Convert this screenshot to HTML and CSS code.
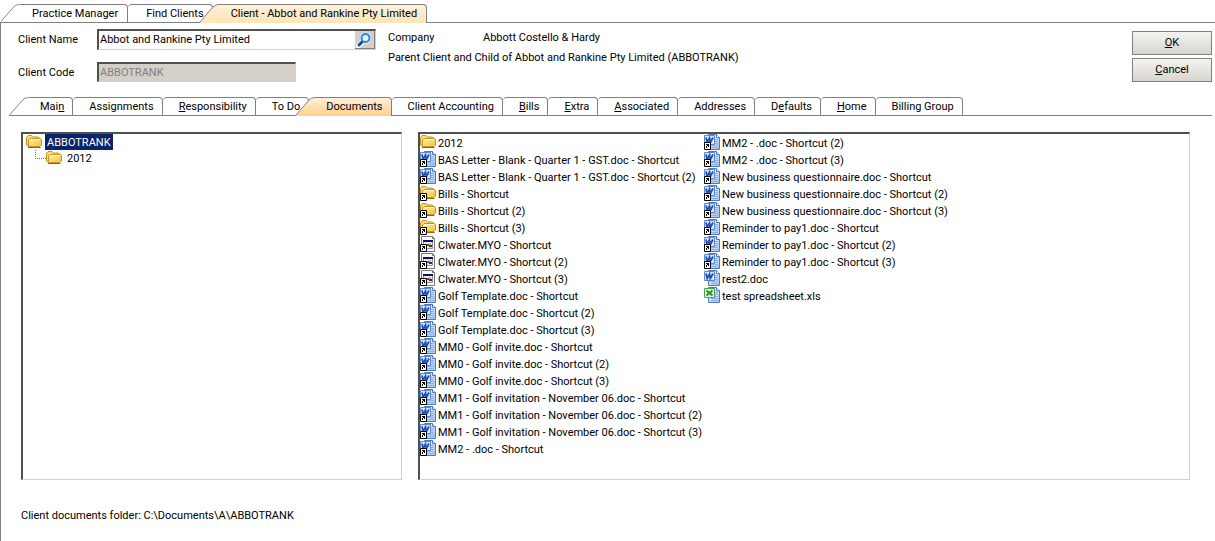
FILE: index.html
```html
<!DOCTYPE html>
<html lang="en">
<head>
  <meta charset="UTF-8">
  <title>Client - Abbot and Rankine Pty Limited</title>
  <meta name="viewport" content="width=device-width, initial-scale=1.0">
  <link rel="stylesheet" href="styles.css">
</head>
<body>

  <!-- Icons used by the tree and the file list -->
  <svg class="sprite" aria-hidden="true">
    <defs>
      <linearGradient id="gradFolder" x1="0" y1="0" x2="1" y2="1">
        <stop offset="0" stop-color="#fff6a8"/>
        <stop offset="1" stop-color="#f4bc3c"/>
      </linearGradient>
      <linearGradient id="gradPage" x1="0" y1="0" x2="1" y2="1">
        <stop offset="0" stop-color="#f4f8ff"/>
        <stop offset="1" stop-color="#a4c4f4"/>
      </linearGradient>
      <linearGradient id="gradTop" x1="0" y1="0" x2="0" y2="1">
        <stop offset="0" stop-color="#fff1dc"/>
        <stop offset="1" stop-color="#ffe4b4"/>
      </linearGradient>
      <linearGradient id="gradSub" x1="0" y1="0" x2="0" y2="1">
        <stop offset="0" stop-color="#fff0dc"/>
        <stop offset="1" stop-color="#ffd08c"/>
      </linearGradient>
    </defs>
    <symbol id="folder" viewBox="0 0 16 16">
      <path d="M.5 11V3.500L2 1.500h4l1.500 1.500h5L13.500 4v8H2z" fill="#f9dc70" stroke="#c89020"/>
      <path d="M2.500 12.500V6L4 4.500h10.500L15.500 6v5L14 12.500z" fill="url(#gradFolder)" stroke="#c89428"/>
      <path d="M2 13.500h12.500" stroke="#94640c" fill="none"/>
      <path d="M4 5.500h10" stroke="#fffbe0"/>
    </symbol>
    <symbol id="arrow" viewBox="0 0 16 16">
      <path d="M.5 8.500h6v7h-6z" fill="#fff" stroke="#000"/>
      <path d="M2 10h3v3H4v-1H3v2H2v-2h1v-1H2z" fill="#000"/>
    </symbol>
    <symbol id="word" viewBox="0 0 16 16">
      <path d="M4.500.5h8l3 3v12h-11z" fill="url(#gradPage)" stroke="#5078bc"/>
      <path d="M12.500.5v3h3" fill="#fff" stroke="#5078bc"/>
      <path d="M11 5.500h3M11 7.500h3M11 9.500h3M7 11.500h7M7 13.500h7" stroke="#8cb0ea"/>
      <path d="M.5 1.500h10v9h-10z" fill="#dce8fc" stroke="#5c88d8"/>
      <path d="M2 3.500l1.200 5L5.500 4l.8 4.500L9 3.500" fill="none" stroke="#2450b0" stroke-width="1.800"/>
    </symbol>
    <symbol id="excel" viewBox="0 0 16 16">
      <path d="M4.500.5h8l3 3v12h-11z" fill="url(#gradPage)" stroke="#5078bc"/>
      <path d="M12.500.5v3h3" fill="#fff" stroke="#5078bc"/>
      <path d="M11 5.500h3M11 7.500h3M11 9.500h3M7 11.500h7M7 13.500h7" stroke="#8cb0ea"/>
      <path d="M.5 1.500h10v9h-10z" fill="#e4f6e0" stroke="#48a448"/>
      <path d="M2.500 3.500l6 5M8.500 3.500l-6 5" stroke="#2c8c2c" stroke-width="2"/>
    </symbol>
    <symbol id="myo" viewBox="0 0 16 16">
      <path d="M1.500.5h11l2 2v13h-13z" fill="#fff" stroke="#777"/>
      <path d="M12.500.5v2h2" fill="none" stroke="#777"/>
      <path d="M3.500 4.500h9v8h-9z" fill="#e6eaf8" stroke="#8890b0"/>
      <path d="M3 5h10" stroke="#10106c" stroke-width="2"/>
      <path d="M7 8h2v2H7z" fill="#d02020"/>
      <path d="M9 7h2v2H9z" fill="#e8c420"/>
      <path d="M9 9h3v2H9z" fill="#1030c0"/>
    </symbol>
  </svg>

  <nav class="tabs window-tabs" role="tablist" aria-label="Windows">
    <button class="tab first" role="tab"><svg class="slant" viewBox="0 0 20 19"><path d="M.5 18.500L14 3Q16.500.5 20 .5"/></svg><span>Practice Manager</span></button>
    <button class="tab" role="tab"><span>Find Clients</span></button>
    <button class="tab active" role="tab" aria-selected="true"><svg class="slant" viewBox="0 0 20 19"><path class="fill-top" d="M.5 19L14 3Q16.500.5 20 .5V19z"/><path d="M.5 18.500L14 3Q16.500.5 20 .5"/></svg><span>Client - Abbot and Rankine Pty Limited</span></button>
    <div class="tabs-line"></div>
  </nav>

  <main class="window">
    <form class="header">
      <div class="fields">
        <label for="clientName">Client Name</label>
        <div class="lookup">
          <input type="text" id="clientName" value="Abbot and Rankine Pty Limited">
          <button type="button" class="search" aria-label="Find client">
            <svg viewBox="0 0 18 16">
              <path d="M8 9.500L3.500 14" stroke="#fff" stroke-width="5" stroke-linecap="round"/>
              <circle cx="10.500" cy="6" r="5.500" fill="#fff"/>
              <path d="M7.500 9.500L4 13" stroke="#1648a8" stroke-width="3" stroke-linecap="round"/>
              <circle cx="10.500" cy="6" r="4" fill="#e4f6ff" stroke="#2488dc" stroke-width="2"/>
            </svg>
          </button>
        </div>
        <label for="clientCode">Client Code</label>
        <input type="text" id="clientCode" value="ABBOTRANK" disabled>
      </div>
      <div class="details">
        <p><span class="caption">Company</span><span>Abbott Costello &amp; Hardy</span></p>
        <p>Parent Client and Child of Abbot and Rankine Pty Limited (ABBOTRANK)</p>
      </div>
      <div class="actions">
        <button type="button"><u>O</u>K</button>
        <button type="button"><u>C</u>ancel</button>
      </div>
    </form>

    <nav class="tabs client-tabs" role="tablist" aria-label="Client">
      <button class="tab first" role="tab"><svg class="slant" viewBox="0 0 20 19"><path d="M.5 18.500L14 3Q16.500.5 20 .5"/></svg><span>Mai<u>n</u></span></button>
      <button class="tab" role="tab"><span>Assignments</span></button>
      <button class="tab" role="tab"><span><u>R</u>esponsibility</span></button>
      <button class="tab" role="tab"><span>To Do</span></button>
      <button class="tab active" role="tab" aria-selected="true"><svg class="slant" viewBox="0 0 20 19"><path class="fill-sub" d="M.5 19L14 3Q16.500.5 20 .5V19z"/><path d="M.5 18.500L14 3Q16.500.5 20 .5"/></svg><span>Documents</span></button>
      <button class="tab" role="tab"><span>Client Accounting</span></button>
      <button class="tab" role="tab"><span><u>B</u>ills</span></button>
      <button class="tab" role="tab"><span><u>E</u>xtra</span></button>
      <button class="tab" role="tab"><span><u>A</u>ssociated</span></button>
      <button class="tab" role="tab"><span>Addresses</span></button>
      <button class="tab" role="tab"><span>D<u>e</u>faults</span></button>
      <button class="tab" role="tab"><span><u>H</u>ome</span></button>
      <button class="tab" role="tab"><span>Billing Group</span></button>
      <div class="tabs-line"></div>
    </nav>

    <div class="panels">
      <ul class="panel tree">
        <li>
          <div class="node selected"><svg class="icon"><use href="#folder"/></svg><span>ABBOTRANK</span></div>
          <ul>
            <li class="node"><svg class="icon"><use href="#folder"/></svg><span>2012</span></li>
          </ul>
        </li>
      </ul>

      <ul class="panel files">
        <li><svg class="icon"><use href="#folder"/></svg>2012</li>
        <li><svg class="icon"><use href="#word"/><use href="#arrow"/></svg>BAS Letter - Blank - Quarter 1 - GST.doc - Shortcut</li>
        <li><svg class="icon"><use href="#word"/><use href="#arrow"/></svg>BAS Letter - Blank - Quarter 1 - GST.doc - Shortcut (2)</li>
        <li><svg class="icon"><use href="#folder"/><use href="#arrow"/></svg>Bills - Shortcut</li>
        <li><svg class="icon"><use href="#folder"/><use href="#arrow"/></svg>Bills - Shortcut (2)</li>
        <li><svg class="icon"><use href="#folder"/><use href="#arrow"/></svg>Bills - Shortcut (3)</li>
        <li><svg class="icon"><use href="#myo"/><use href="#arrow"/></svg>Clwater.MYO - Shortcut</li>
        <li><svg class="icon"><use href="#myo"/><use href="#arrow"/></svg>Clwater.MYO - Shortcut (2)</li>
        <li><svg class="icon"><use href="#myo"/><use href="#arrow"/></svg>Clwater.MYO - Shortcut (3)</li>
        <li><svg class="icon"><use href="#word"/><use href="#arrow"/></svg>Golf Template.doc - Shortcut</li>
        <li><svg class="icon"><use href="#word"/><use href="#arrow"/></svg>Golf Template.doc - Shortcut (2)</li>
        <li><svg class="icon"><use href="#word"/><use href="#arrow"/></svg>Golf Template.doc - Shortcut (3)</li>
        <li><svg class="icon"><use href="#word"/><use href="#arrow"/></svg>MM0 - Golf invite.doc - Shortcut</li>
        <li><svg class="icon"><use href="#word"/><use href="#arrow"/></svg>MM0 - Golf invite.doc - Shortcut (2)</li>
        <li><svg class="icon"><use href="#word"/><use href="#arrow"/></svg>MM0 - Golf invite.doc - Shortcut (3)</li>
        <li><svg class="icon"><use href="#word"/><use href="#arrow"/></svg>MM1 - Golf invitation - November 06.doc - Shortcut</li>
        <li><svg class="icon"><use href="#word"/><use href="#arrow"/></svg>MM1 - Golf invitation - November 06.doc - Shortcut (2)</li>
        <li><svg class="icon"><use href="#word"/><use href="#arrow"/></svg>MM1 - Golf invitation - November 06.doc - Shortcut (3)</li>
        <li><svg class="icon"><use href="#word"/><use href="#arrow"/></svg>MM2 - .doc - Shortcut</li>
        <li><svg class="icon"><use href="#word"/><use href="#arrow"/></svg>MM2 - .doc - Shortcut (2)</li>
        <li><svg class="icon"><use href="#word"/><use href="#arrow"/></svg>MM2 - .doc - Shortcut (3)</li>
        <li><svg class="icon"><use href="#word"/><use href="#arrow"/></svg>New business questionnaire.doc - Shortcut</li>
        <li><svg class="icon"><use href="#word"/><use href="#arrow"/></svg>New business questionnaire.doc - Shortcut (2)</li>
        <li><svg class="icon"><use href="#word"/><use href="#arrow"/></svg>New business questionnaire.doc - Shortcut (3)</li>
        <li><svg class="icon"><use href="#word"/><use href="#arrow"/></svg>Reminder to pay1.doc - Shortcut</li>
        <li><svg class="icon"><use href="#word"/><use href="#arrow"/></svg>Reminder to pay1.doc - Shortcut (2)</li>
        <li><svg class="icon"><use href="#word"/><use href="#arrow"/></svg>Reminder to pay1.doc - Shortcut (3)</li>
        <li><svg class="icon"><use href="#word"/></svg>rest2.doc</li>
        <li><svg class="icon"><use href="#excel"/></svg>test spreadsheet.xls</li>
      </ul>
    </div>

    <p class="path">Client documents folder: C:\Documents\A\ABBOTRANK</p>
  </main>

</body>
</html>
```
FILE: styles.css
```css
* {
  box-sizing: border-box;
}

body {
  margin: 0;
  min-height: 100vh;
  display: flex;
  flex-direction: column;
  background-color: #fff;
  color: #000;
}

body, button, input {
  font-family: Roboto, sans-serif;
  font-size: 11px;
  line-height: 18px;
}

ul, p {
  margin: 0;
  padding: 0;
  list-style: none;
}

.sprite {
  position: absolute;
  width: 0;
  height: 0;
}

/* Tabs */
.tabs {
  display: flex;
  height: 19px;
}

.tab {
  display: flex;
  flex: none;
  padding: 0;
  border: none;
  background: none;
  color: #000;
  white-space: nowrap;
}

.tab span {
  height: 19px;
  padding: 0 8px 0 16px;
  border: 1px solid #808080;
  border-left: none;
  border-radius: 4px 4px 0 0;
}

.tab.first span,
.tab.active span {
  padding-left: 11px;
  border-top-left-radius: 0;
}

.tab.active {
  position: relative;
  margin-left: -14px;
}

.tab.active span {
  border-bottom: none;
}

.window-tabs .tab span {
  padding: 0 8px 0 18px;
}

.window-tabs .first span,
.window-tabs .active span {
  padding: 0 9px 0 12px;
}

.window-tabs .active span {
  background: linear-gradient(#fff1dc, #ffe4b4);
}

.client-tabs .active span {
  background: linear-gradient(#fff0dc, #ffd08c);
}

.slant {
  width: 20px;
  height: 19px;
  fill: none;
  stroke: #808080;
}

.slant .fill-top {
  fill: url(#gradTop);
  stroke: none;
}

.slant .fill-sub {
  fill: url(#gradSub);
  stroke: none;
}

.tab.first .slant {
  border-bottom: 1px solid #808080;
}

.tabs-line {
  flex: 1;
  border-bottom: 1px solid #808080;
}

.window-tabs {
  margin-top: 4px;
}

.client-tabs {
  margin: 15px 3px 0 8px;
}

/* Client header */
.window {
  flex: 1;
  border-left: 1px solid #808080;
}

.header {
  display: flex;
  padding: 6px 3px 0 17px;
}

.fields {
  display: grid;
  grid-template-columns: 79px 279px;
  grid-template-rows: 21px 20px;
  row-gap: 12px;
}

.fields label {
  line-height: 21px;
}

.fields input {
  height: 20px;
  padding: 0 1px;
  border: 1px solid #d4d0c8;
  border-top: 2px solid #505050;
  border-left: 2px solid #505050;
  outline: none;
}

#clientCode {
  width: 199px;
  background-color: #d4d0c8;
  color: #808080;
}

.lookup {
  display: flex;
  border: 1px solid #d4d0c8;
  border-top: 2px solid #505050;
  border-left: 2px solid #505050;
}

.lookup input {
  flex: 1;
  min-width: 0;
  height: 18px;
  border: none;
}

.search {
  width: 20px;
  padding: 0;
  border: none;
  border-right: 1px solid #808080;
  border-bottom: 1px solid #808080;
  background-color: #d4d0c8;
}

.search svg {
  display: block;
  width: 18px;
  height: 16px;
  fill: none;
}

.details {
  flex: 1;
  padding-left: 12px;
  line-height: 20px;
}

.details p:first-child {
  display: flex;
  height: 19px;
  line-height: 17px;
}

.caption {
  width: 95px;
}

.actions {
  display: flex;
  flex-direction: column;
  gap: 3px;
  padding-top: 2px;
}

.actions button {
  width: 80px;
  height: 24px;
  padding: 0;
  border: 1px solid #808080;
  background: linear-gradient(#f4f3f1, #d8d5ce);
  color: #000;
}

/* Folder tree and file list */
.panels {
  display: grid;
  grid-template-columns: 381px 1fr;
  gap: 16px;
  margin: 16px 25px 0 20px;
}

.panel {
  min-height: 348px;
  border: 1px solid #d4d0c8;
  border-top: 2px solid #505050;
  border-left: 2px solid #505050;
}

.icon {
  flex: none;
  width: 16px;
  height: 16px;
}

.tree {
  padding-left: 3px;
}

.node {
  display: flex;
  gap: 3px;
  height: 16px;
}

.node span {
  height: 16px;
  padding: 0 2px;
}

.selected span {
  background-color: #0a246a;
  color: #fff;
}

.tree ul {
  padding-left: 9px;
}

.tree ul .node::before {
  content: "";
  width: 10px;
  height: 8px;
  margin-right: -3px;
  border-left: 1px dotted #808080;
  border-bottom: 1px dotted #808080;
}

.files {
  display: grid;
  grid-template-rows: repeat(19, 17px);
  grid-auto-flow: column;
  grid-auto-columns: 284px;
  white-space: nowrap;
}

.files li {
  display: flex;
  gap: 2px;
  line-height: 19px;
}

.path {
  margin: 27px 20px 0;
}
```
